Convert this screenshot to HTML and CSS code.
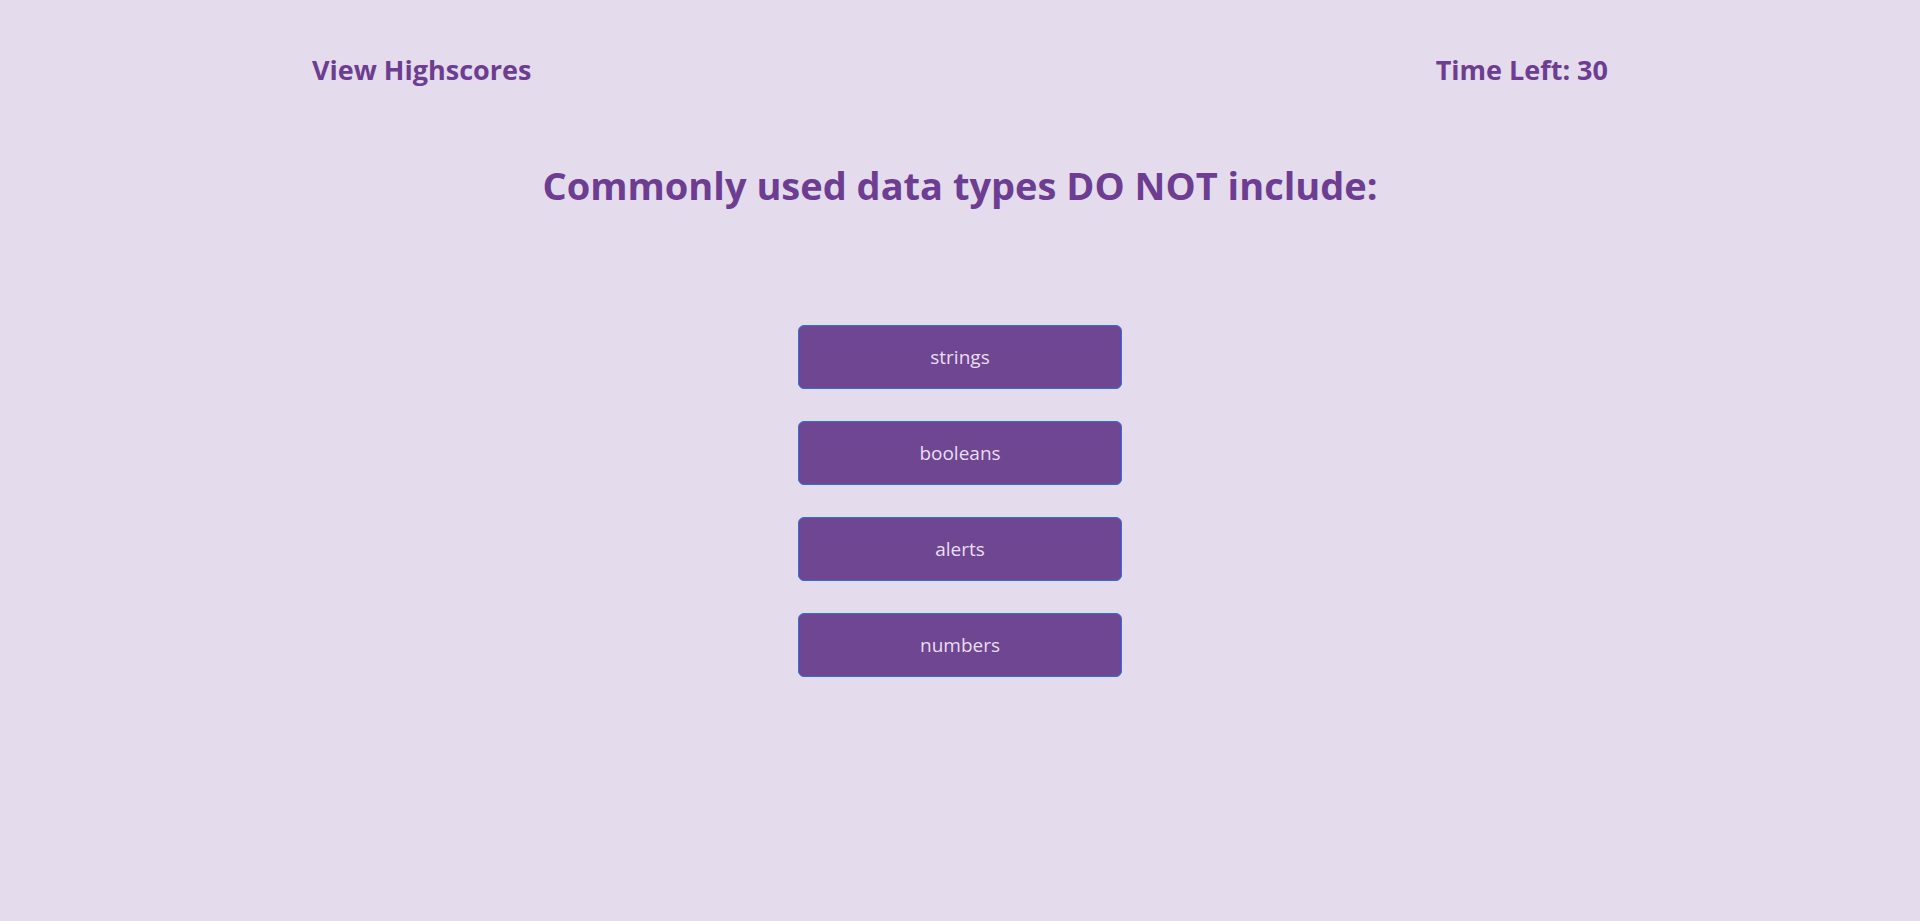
FILE: index.html
```html
<!DOCTYPE html>
<html lang="en">
<head>
<meta charset="utf-8">
<title>Quiz</title>
<link rel="stylesheet" href="styles.css">
</head>
<body>
<header class="top-bar">
  <a class="highscores" href="#">View Highscores</a>
  <div class="timer">Time Left: <span>30</span></div>
</header>
<main class="quiz">
  <h1 class="question">Commonly used data types DO NOT include:</h1>
  <div class="choices">
    <button class="choice">strings</button>
    <button class="choice">booleans</button>
    <button class="choice">alerts</button>
    <button class="choice">numbers</button>
  </div>
</main>
</body>
</html>
```
FILE: styles.css
```css
html, body {
  margin: 0;
  padding: 0;
}
body {
  background: #e4dbec;
  color: #6c3d91;
  font-family: "Open Sans", "Noto Sans", sans-serif;
  min-height: 921px;
}
.top-bar {
  width: 1296px;
  margin: 0 auto;
  padding-top: 50px;
  display: flex;
  justify-content: space-between;
  align-items: center;
  font-size: 27px;
  font-weight: 700;
  line-height: 40px;
}
.highscores {
  color: #6c3d91;
  text-decoration: none;
}
.quiz {
  display: flex;
  flex-direction: column;
  align-items: center;
}
.question {
  margin: 65px 0 0;
  font-size: 38px;
  line-height: 60px;
  font-weight: 700;
}
.choices {
  display: flex;
  flex-direction: column;
  gap: 32px;
  margin-top: 110px;
}
.choice {
  width: 324px;
  height: 64px;
  background: #6f4691;
  color: #eadff2;
  border: 1px solid #2e6ee6;
  border-radius: 6px;
  font-family: "Open Sans", "Noto Sans", sans-serif;
  font-size: 19px;
  cursor: pointer;
}
```
